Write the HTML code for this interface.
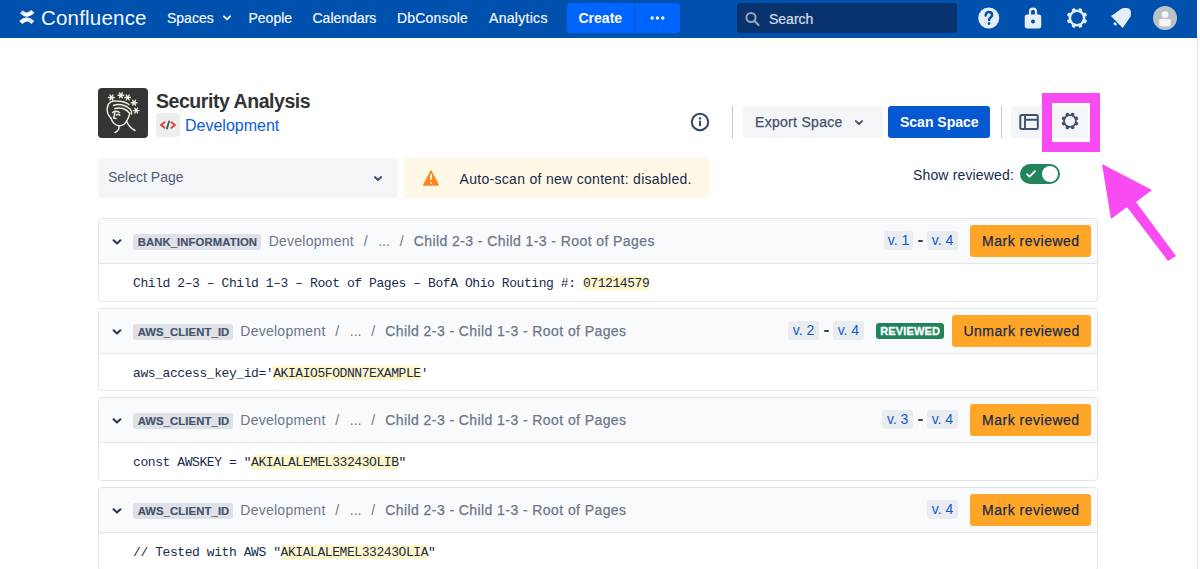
<!DOCTYPE html>
<html><head><meta charset="utf-8">
<style>
*{box-sizing:border-box;margin:0;padding:0}
html,body{width:1200px;height:569px;overflow:hidden;background:#fff;font-family:"Liberation Sans",sans-serif}
.a{position:absolute}
.t{position:absolute;white-space:pre;line-height:1}
#nav{position:absolute;left:0;top:0;width:1197px;height:37.5px;background:#0050AD}
#edge{position:absolute;left:1197px;top:37px;width:1px;height:532px;background:#e4e4e4}
.nv{color:#F2F6FC;font-size:14px;-webkit-text-stroke:0.2px #F2F6FC}
.card{position:absolute;left:98px;width:1000px;height:83px;border:1px solid #E3E5E8;border-radius:4px;background:#fff;overflow:hidden}
.card .hd{position:absolute;left:0;top:0;width:100%;height:45px;background:#F9FAFB;border-bottom:1px solid #E3E5E8}
.tag{position:absolute;height:16px;background:#DFE1E6;border-radius:3px;color:#44546F;font-weight:bold;font-size:11.3px;line-height:16px;padding-left:4.5px;white-space:pre;-webkit-text-stroke:0.2px #44546F;letter-spacing:0.1px}
.path{position:absolute;color:#6B778C;font-size:14px;line-height:1;white-space:pre}
.vb{position:absolute;height:19px;background:#EBECF0;border-radius:3px;color:#0C5BD0;font-size:14px;line-height:18px;text-align:center;white-space:pre}
.dash{position:absolute;color:#42526E;font-size:14px;line-height:1}
.mbtn{position:absolute;height:32px;background:#FFA629;border-radius:3px;color:#172B4D;font-size:14px;line-height:33.5px;text-align:center;white-space:pre;letter-spacing:0.5px;text-indent:0.5px;-webkit-text-stroke:0.25px #172B4D}
.code{position:absolute;left:34px;margin-top:1px;font-family:"Liberation Mono",monospace;font-size:13px;letter-spacing:-0.425px;color:#172B4D;line-height:14px;white-space:pre}
.hl{background:linear-gradient(#FFF6C6,#FFF6C6) no-repeat 0 0/calc(100% - 0.8px) 14px}
</style></head>
<body>
<div id="nav"></div>
<div id="edge"></div>

<!-- NAVBAR -->
<svg class="a" style="left:16px;top:6px" width="22" height="22" viewBox="0 0 22 22">
  <defs><linearGradient id="lg1" x1="0" y1="0" x2="1" y2="0.3"><stop offset="0" stop-color="#B9CBE6"/><stop offset="0.6" stop-color="#ffffff"/></linearGradient>
  <linearGradient id="lg2" x1="1" y1="0" x2="0" y2="0.3"><stop offset="0" stop-color="#B9CBE6"/><stop offset="0.6" stop-color="#ffffff"/></linearGradient></defs>
  <path d="M5.3 5.6Q11 11.6 16.8 5.4" stroke="url(#lg1)" stroke-width="4.2" fill="none"/>
  <path d="M4.8 16.6Q11 10.4 17 16.4" stroke="url(#lg2)" stroke-width="4.2" fill="none"/>
</svg>
<div class="t" style="left:41px;top:7.5px;font-size:20.5px;color:#F4F7FB;letter-spacing:0.2px">Confluence</div>

<div class="t nv" style="left:167px;top:10.6px">Spaces</div>
<svg class="a" style="left:222px;top:14px" width="10" height="8" viewBox="0 0 10 8"><path d="M2 2.3l3 3 3-3" stroke="#F2F6FC" stroke-width="1.9" fill="none" stroke-linecap="round" stroke-linejoin="round"/></svg>
<div class="t nv" style="left:248.5px;top:10.6px">People</div>
<div class="t nv" style="left:312.5px;top:10.6px">Calendars</div>
<div class="t nv" style="left:397px;top:10.6px;letter-spacing:0.2px">DbConsole</div>
<div class="t nv" style="left:489px;top:10.6px;letter-spacing:0.3px">Analytics</div>

<div class="a" style="left:567px;top:3px;width:113px;height:30px;background:#0065FF;border-radius:3px"></div>
<div class="a" style="left:634px;top:3px;width:1px;height:30px;background:#0050C8"></div>
<div class="t" style="left:578.5px;top:11px;font-size:14px;font-weight:bold;color:#fff">Create</div>
<svg class="a" style="left:650px;top:15px" width="16" height="6" viewBox="0 0 16 6"><circle cx="2.2" cy="3" r="1.7" fill="#fff"/><circle cx="7.5" cy="3" r="1.7" fill="#fff"/><circle cx="12.8" cy="3" r="1.7" fill="#fff"/></svg>

<div class="a" style="left:737px;top:3px;width:220px;height:29.5px;background:#08336F;border-radius:3px"></div>
<svg class="a" style="left:744px;top:11px" width="17" height="16" viewBox="0 0 17 16"><circle cx="7" cy="6.5" r="4.6" stroke="#9AA5B4" stroke-width="2" fill="none"/><path d="M10.5 10l4 4" stroke="#9AA5B4" stroke-width="2.2" stroke-linecap="round"/></svg>
<div class="t nv" style="left:769px;top:12.2px;color:#C9D3E2">Search</div>

<!-- right icons -->
<svg class="a" style="left:977px;top:7px" width="23" height="22" viewBox="0 0 23 22">
  <circle cx="11.75" cy="11" r="10.5" fill="#E6EEFA"/>
  <path d="M8.7 8.4C8.7 6.4 10.1 5 11.9 5C13.8 5 15.1 6.3 15.1 8C15.1 10.3 12.2 10.5 12.1 12.9" stroke="#0050AD" stroke-width="2.5" fill="none" stroke-linecap="round"/>
  <circle cx="12" cy="16.6" r="1.4" fill="#0050AD"/>
</svg>
<svg class="a" style="left:1023px;top:7px" width="20" height="22" viewBox="0 0 20 22">
  <path d="M7 8V4.6A3 3 0 0 1 13 4.6V8" stroke="#E6EEFA" stroke-width="2.2" fill="none"/>
  <rect x="1.75" y="7.6" width="16.5" height="13.8" rx="2.6" fill="#E6EEFA"/>
  <circle cx="10" cy="14.4" r="2" fill="#0050AD"/>
</svg>
<svg class="a" style="left:1066px;top:6.8px" width="22" height="22" viewBox="0 0 22 22"><circle cx="11" cy="11" r="8.4" fill="#E6EEFA"/><rect x="9.20" y="0.80" width="3.6" height="3.30" rx="1" fill="#E6EEFA" transform="rotate(22.5 11 11)"/><rect x="9.20" y="0.80" width="3.6" height="3.30" rx="1" fill="#E6EEFA" transform="rotate(67.5 11 11)"/><rect x="9.20" y="0.80" width="3.6" height="3.30" rx="1" fill="#E6EEFA" transform="rotate(112.5 11 11)"/><rect x="9.20" y="0.80" width="3.6" height="3.30" rx="1" fill="#E6EEFA" transform="rotate(157.5 11 11)"/><rect x="9.20" y="0.80" width="3.6" height="3.30" rx="1" fill="#E6EEFA" transform="rotate(202.5 11 11)"/><rect x="9.20" y="0.80" width="3.6" height="3.30" rx="1" fill="#E6EEFA" transform="rotate(247.5 11 11)"/><rect x="9.20" y="0.80" width="3.6" height="3.30" rx="1" fill="#E6EEFA" transform="rotate(292.5 11 11)"/><rect x="9.20" y="0.80" width="3.6" height="3.30" rx="1" fill="#E6EEFA" transform="rotate(337.5 11 11)"/><circle cx="11" cy="11" r="5.9" fill="#0050AD"/></svg>
<svg class="a" style="left:1106px;top:4px" width="30" height="28" viewBox="0 0 30 28">
  <path d="M4.9 12.05L16.7 23.9L24.6 12.5C25.2 9.5 25.1 6.3 23.6 5.1C22 4 19 3.8 16.2 4.6C13 6 10.5 9 4.9 12.05Z" fill="#E6EEFA"/>
  <ellipse cx="9.2" cy="19.9" rx="1.9" ry="1.3" transform="rotate(40 9.2 19.9)" fill="#E6EEFA"/>
</svg>
<svg class="a" style="left:1153px;top:6px" width="24" height="24" viewBox="0 0 24 24">
  <circle cx="12" cy="12" r="12" fill="#BCC1C8"/>
  <circle cx="12" cy="8.6" r="3.4" fill="#F4F5F7"/>
  <rect x="6.2" y="13" width="11.6" height="7.2" rx="1.5" fill="#F4F5F7"/>
</svg>

<!-- HEADER -->
<svg class="a" style="left:98px;top:88px" width="50" height="50" viewBox="0 0 50 50">
  <defs><path id="ast" d="M-2.8 0H2.8M-1.4 -2.4L1.4 2.4M-1.4 2.4L1.4 -2.4"/></defs>
  <rect width="50" height="50" rx="4" fill="#353535"/>
  <g stroke="#EFEBDD" stroke-width="1.45" fill="none" stroke-linecap="round" stroke-linejoin="round">
    <use href="#ast" x="13.4" y="9.4"/><use href="#ast" x="22.9" y="7.3"/><use href="#ast" x="29.7" y="9.4"/>
    <use href="#ast" x="36.1" y="14.7"/><use href="#ast" x="38.2" y="22.6"/>
    <path d="M9.5 19C10 14.5 14 12.5 18 13C23 13.2 28 14 31 16.5"/>
    <path d="M15.5 17.5C20 15.5 27 16.5 32 21C33.5 22.5 34 24 33.5 26"/>
    <path d="M17 20.5C22 19 28 20.5 31.5 25"/>
    <path d="M9.5 19C8.5 23 10 27 12.8 30"/>
    <path d="M12.8 30C14.5 34.5 17.5 37.5 21 37.8C24.5 38 27.5 35.5 29 32.5C30.5 30 31.5 28 31.8 25"/>
    <path d="M21 37.8C21.5 40.5 20 43 17 44.5"/>
    <path d="M28.5 33C30 37 33 40.5 37 42.5"/>
    <path d="M14.5 24.5C16.5 23 19.5 23 21.5 24.5"/>
    <path d="M17 24.5L15.5 30L18 30.5"/>
    <path d="M18.5 27C19.5 26 21 26.2 21.8 27.2"/>
  </g>
</svg>
<div class="t" style="left:156px;top:92.4px;font-size:19.5px;font-weight:bold;color:#333333;letter-spacing:-0.45px">Security Analysis</div>
<svg class="a" style="left:156px;top:113px" width="24" height="24" viewBox="0 0 24 24">
  <rect width="24" height="24" rx="4" fill="#ECEDEE"/>
  <path d="M8.6 9.2L5 12L8.6 14.8M15.4 9.2L19 12L15.4 14.8" stroke="#D9453C" stroke-width="1.9" fill="none" stroke-linecap="round" stroke-linejoin="round"/>
  <path d="M13 8.4L11 15.6" stroke="#3E5A5E" stroke-width="1.8" stroke-linecap="round"/>
</svg>
<div class="t" style="left:185px;top:118.2px;font-size:16px;color:#0C5CD4">Development</div>

<!-- toolbar -->
<svg class="a" style="left:690px;top:112px" width="20" height="20" viewBox="0 0 20 20">
  <circle cx="10" cy="10" r="8.2" stroke="#344563" stroke-width="2" fill="none"/>
  <circle cx="10" cy="6.4" r="1.2" fill="#344563"/>
  <rect x="9" y="8.6" width="2" height="5.6" rx="0.8" fill="#344563"/>
</svg>
<div class="a" style="left:732px;top:106px;width:1px;height:31.5px;background:#C4C8CF"></div>
<div class="a" style="left:743px;top:106px;width:139.5px;height:31.5px;background:#F4F5F7;border-radius:3px"></div>
<div class="t" style="left:755px;top:114.8px;font-size:14px;color:#42526E;letter-spacing:0.3px;-webkit-text-stroke:0.25px #42526E">Export Space</div>
<svg class="a" style="left:853px;top:118px" width="12" height="10" viewBox="0 0 12 10"><path d="M2.9 3.1l3.1 2.9 3.1-2.9" stroke="#42526E" stroke-width="1.9" fill="none" stroke-linecap="round" stroke-linejoin="round"/></svg>
<div class="a" style="left:888px;top:106px;width:102px;height:31.5px;background:#0558CF;border-radius:3px"></div>
<div class="t" style="left:900px;top:114.8px;font-size:14px;font-weight:bold;color:#fff">Scan Space</div>
<div class="a" style="left:1000.5px;top:106px;width:1px;height:31.5px;background:#C4C8CF"></div>
<div class="a" style="left:1011px;top:106px;width:77px;height:31.5px;background:#F4F5F7;border-radius:3px"></div>
<svg class="a" style="left:1018px;top:113px" width="22" height="18" viewBox="0 0 22 18">
  <rect x="2.3" y="2" width="17.5" height="14" rx="1.5" stroke="#42526E" stroke-width="2" fill="none"/>
  <path d="M7 2V16M7 6.8H19.8" stroke="#42526E" stroke-width="1.9"/>
</svg>
<svg class="a" style="left:1059.6px;top:111.4px" width="20" height="20" viewBox="0 0 20 20"><circle cx="10" cy="10" r="6.8" fill="#42526E"/><rect x="8.25" y="1.40" width="3.5" height="3.30" rx="1.2" fill="#42526E" transform="rotate(22.5 10 10)"/><rect x="8.25" y="1.40" width="3.5" height="3.30" rx="1.2" fill="#42526E" transform="rotate(67.5 10 10)"/><rect x="8.25" y="1.40" width="3.5" height="3.30" rx="1.2" fill="#42526E" transform="rotate(112.5 10 10)"/><rect x="8.25" y="1.40" width="3.5" height="3.30" rx="1.2" fill="#42526E" transform="rotate(157.5 10 10)"/><rect x="8.25" y="1.40" width="3.5" height="3.30" rx="1.2" fill="#42526E" transform="rotate(202.5 10 10)"/><rect x="8.25" y="1.40" width="3.5" height="3.30" rx="1.2" fill="#42526E" transform="rotate(247.5 10 10)"/><rect x="8.25" y="1.40" width="3.5" height="3.30" rx="1.2" fill="#42526E" transform="rotate(292.5 10 10)"/><rect x="8.25" y="1.40" width="3.5" height="3.30" rx="1.2" fill="#42526E" transform="rotate(337.5 10 10)"/><circle cx="10" cy="10" r="5.0" fill="#F4F5F7"/></svg>

<!-- filter row -->
<div class="a" style="left:98px;top:158px;width:300px;height:40px;background:#F4F5F7;border-radius:3px"></div>
<div class="t" style="left:108px;top:170.3px;font-size:14px;color:#505F79">Select Page</div>
<svg class="a" style="left:372px;top:174px" width="12" height="10" viewBox="0 0 12 10"><path d="M2.9 3.1l3.1 2.9 3.1-2.9" stroke="#42526E" stroke-width="2" fill="none" stroke-linecap="round" stroke-linejoin="round"/></svg>
<div class="a" style="left:403.5px;top:158px;width:305.5px;height:40px;background:#FFF8E6;border-radius:3px"></div>
<svg class="a" style="left:421px;top:168px" width="20" height="19" viewBox="0 0 20 19">
  <path d="M10 3L17.2 16.9H2.8z" fill="#F88A21" stroke="#F88A21" stroke-width="1.5" stroke-linejoin="round"/>
  <rect x="9.15" y="6.1" width="1.7" height="5.8" fill="#FFF8E6"/>
  <rect x="9.15" y="14" width="1.7" height="1.6" fill="#FFF8E6"/>
</svg>
<div class="t" style="left:459.5px;top:171.5px;font-size:14px;color:#172B4D;letter-spacing:0.3px">Auto-scan of new content: disabled.</div>

<div class="t" style="left:913px;top:167.7px;font-size:14px;color:#172B4D;letter-spacing:0.15px">Show reviewed:</div>
<div class="a" style="left:1020px;top:164px;width:40px;height:20px;background:#22845B;border-radius:10px"></div>
<div class="a" style="left:1041.5px;top:165.8px;width:16.5px;height:16.5px;background:#fff;border-radius:50%"></div>
<svg class="a" style="left:1024px;top:167px" width="14" height="13" viewBox="0 0 14 13"><path d="M3 7.1l2.6 2.6 5.4-5.5" stroke="#fff" stroke-width="1.8" fill="none" stroke-linecap="round" stroke-linejoin="round"/></svg>

<!-- magenta annotation -->
<div class="a" style="left:1042px;top:93px;width:58px;height:59px;border:10px solid #F84BF1"></div>
<svg class="a" style="left:1095px;top:160px" width="90" height="105" viewBox="1095 160 90 105">
  <polygon points="1102,164 1152,190 1136,202 1176,256 1168,261 1127,207 1111,219" fill="#F84BF1"/>
</svg>

<!-- CARDS -->
<div id="cards">
<div class="card" style="top:218px;height:84px"><div class="hd"></div>
<svg class="a" style="left:13px;top:17.7px" width="10" height="10" viewBox="0 0 10 10"><path d="M1.6 3.3l3.4 3.2 3.4-3.2" stroke="#253858" stroke-width="2.1" fill="none" stroke-linecap="round" stroke-linejoin="round"/></svg>
<div class="tag" style="left:34.2px;top:14.9px;width:128px">BANK_INFORMATION</div>
<div class="path" style="left:169.7px;top:14.6px;letter-spacing:0.25px">Development</div>
<div class="path" style="left:264.7px;top:14.6px">/</div>
<div class="path" style="left:279.2px;top:14.6px">...</div>
<div class="path" style="left:300.7px;top:14.6px">/</div>
<div class="path" style="left:314.7px;top:14.6px;letter-spacing:0.42px;-webkit-text-stroke:0.25px #6B778C">Child 2-3 - Child 1-3 - Root of Pages</div>
<div class="vb" style="left:785.1px;top:12.3px;width:28.8px">v. 1</div>
<div class="vb" style="left:828.2px;top:12.3px;width:30.6px">v. 4</div>
<div class="a" style="left:818.7px;top:21px;width:5.2px;height:1.7px;background:#344563;border-radius:1px"></div>
<div class="mbtn" style="left:871.3px;top:5.9px;width:120.6px">Mark reviewed</div>
<div class="code" style="top:56.6px">Child 2–3 – Child 1–3 – Root of Pages – BofA Ohio Routing #: <span class="hl">071214579</span></div>
</div>
<div class="card" style="top:308px;height:83px"><div class="hd"></div>
<svg class="a" style="left:13px;top:17.7px" width="10" height="10" viewBox="0 0 10 10"><path d="M1.6 3.3l3.4 3.2 3.4-3.2" stroke="#253858" stroke-width="2.1" fill="none" stroke-linecap="round" stroke-linejoin="round"/></svg>
<div class="tag" style="left:34.2px;top:14.9px;width:100px">AWS_CLIENT_ID</div>
<div class="path" style="left:141.3px;top:14.6px;letter-spacing:0.25px">Development</div>
<div class="path" style="left:236.3px;top:14.6px">/</div>
<div class="path" style="left:250.8px;top:14.6px">...</div>
<div class="path" style="left:272.3px;top:14.6px">/</div>
<div class="path" style="left:286.3px;top:14.6px;letter-spacing:0.42px;-webkit-text-stroke:0.25px #6B778C">Child 2-3 - Child 1-3 - Root of Pages</div>
<div class="vb" style="left:689.0px;top:12.3px;width:31.2px">v. 2</div>
<div class="vb" style="left:733.8px;top:12.3px;width:31.2px">v. 4</div>
<div class="a" style="left:724.7px;top:21px;width:5.2px;height:1.7px;background:#344563;border-radius:1px"></div>
<div class="a" style="left:777px;top:13.8px;width:68px;height:16px;background:#1F845A;border-radius:3px;color:#fff;font-weight:bold;font-size:11px;line-height:16px;text-align:center;letter-spacing:0.15px;text-indent:0.15px;-webkit-text-stroke:0.3px #fff">REVIEWED</div>
<div class="mbtn" style="left:853.0px;top:5.9px;width:138.7px">Unmark reviewed</div>
<div class="code" style="top:56.6px">aws_access_key_id='<span class="hl">AKIAIO5FODNN7EXAMPLE</span>'</div>
</div>
<div class="card" style="top:397px;height:84px"><div class="hd"></div>
<svg class="a" style="left:13px;top:17.7px" width="10" height="10" viewBox="0 0 10 10"><path d="M1.6 3.3l3.4 3.2 3.4-3.2" stroke="#253858" stroke-width="2.1" fill="none" stroke-linecap="round" stroke-linejoin="round"/></svg>
<div class="tag" style="left:34.2px;top:14.9px;width:100px">AWS_CLIENT_ID</div>
<div class="path" style="left:141.3px;top:14.6px;letter-spacing:0.25px">Development</div>
<div class="path" style="left:236.3px;top:14.6px">/</div>
<div class="path" style="left:250.8px;top:14.6px">...</div>
<div class="path" style="left:272.3px;top:14.6px">/</div>
<div class="path" style="left:286.3px;top:14.6px;letter-spacing:0.42px;-webkit-text-stroke:0.25px #6B778C">Child 2-3 - Child 1-3 - Root of Pages</div>
<div class="vb" style="left:783.3px;top:12.3px;width:30.7px">v. 3</div>
<div class="vb" style="left:828.0px;top:12.3px;width:30.8px">v. 4</div>
<div class="a" style="left:818.7px;top:21px;width:5.2px;height:1.7px;background:#344563;border-radius:1px"></div>
<div class="mbtn" style="left:871.3px;top:5.9px;width:120.6px">Mark reviewed</div>
<div class="code" style="top:56.6px">const AWSKEY = "<span class="hl">AKIALALEMEL33243OLIB</span>"</div>
</div>
<div class="card" style="top:487px;height:84px"><div class="hd"></div>
<svg class="a" style="left:13px;top:17.7px" width="10" height="10" viewBox="0 0 10 10"><path d="M1.6 3.3l3.4 3.2 3.4-3.2" stroke="#253858" stroke-width="2.1" fill="none" stroke-linecap="round" stroke-linejoin="round"/></svg>
<div class="tag" style="left:34.2px;top:14.9px;width:100px">AWS_CLIENT_ID</div>
<div class="path" style="left:141.3px;top:14.6px;letter-spacing:0.25px">Development</div>
<div class="path" style="left:236.3px;top:14.6px">/</div>
<div class="path" style="left:250.8px;top:14.6px">...</div>
<div class="path" style="left:272.3px;top:14.6px">/</div>
<div class="path" style="left:286.3px;top:14.6px;letter-spacing:0.42px;-webkit-text-stroke:0.25px #6B778C">Child 2-3 - Child 1-3 - Root of Pages</div>
<div class="vb" style="left:828.0px;top:12.3px;width:31px">v. 4</div>
<div class="mbtn" style="left:871.3px;top:5.9px;width:120.6px">Mark reviewed</div>
<div class="code" style="top:56.6px">// Tested with AWS "<span class="hl">AKIALALEMEL33243OLIA</span>"</div>
</div>
</div>
<!--ENDCARDS-->
</body></html>
